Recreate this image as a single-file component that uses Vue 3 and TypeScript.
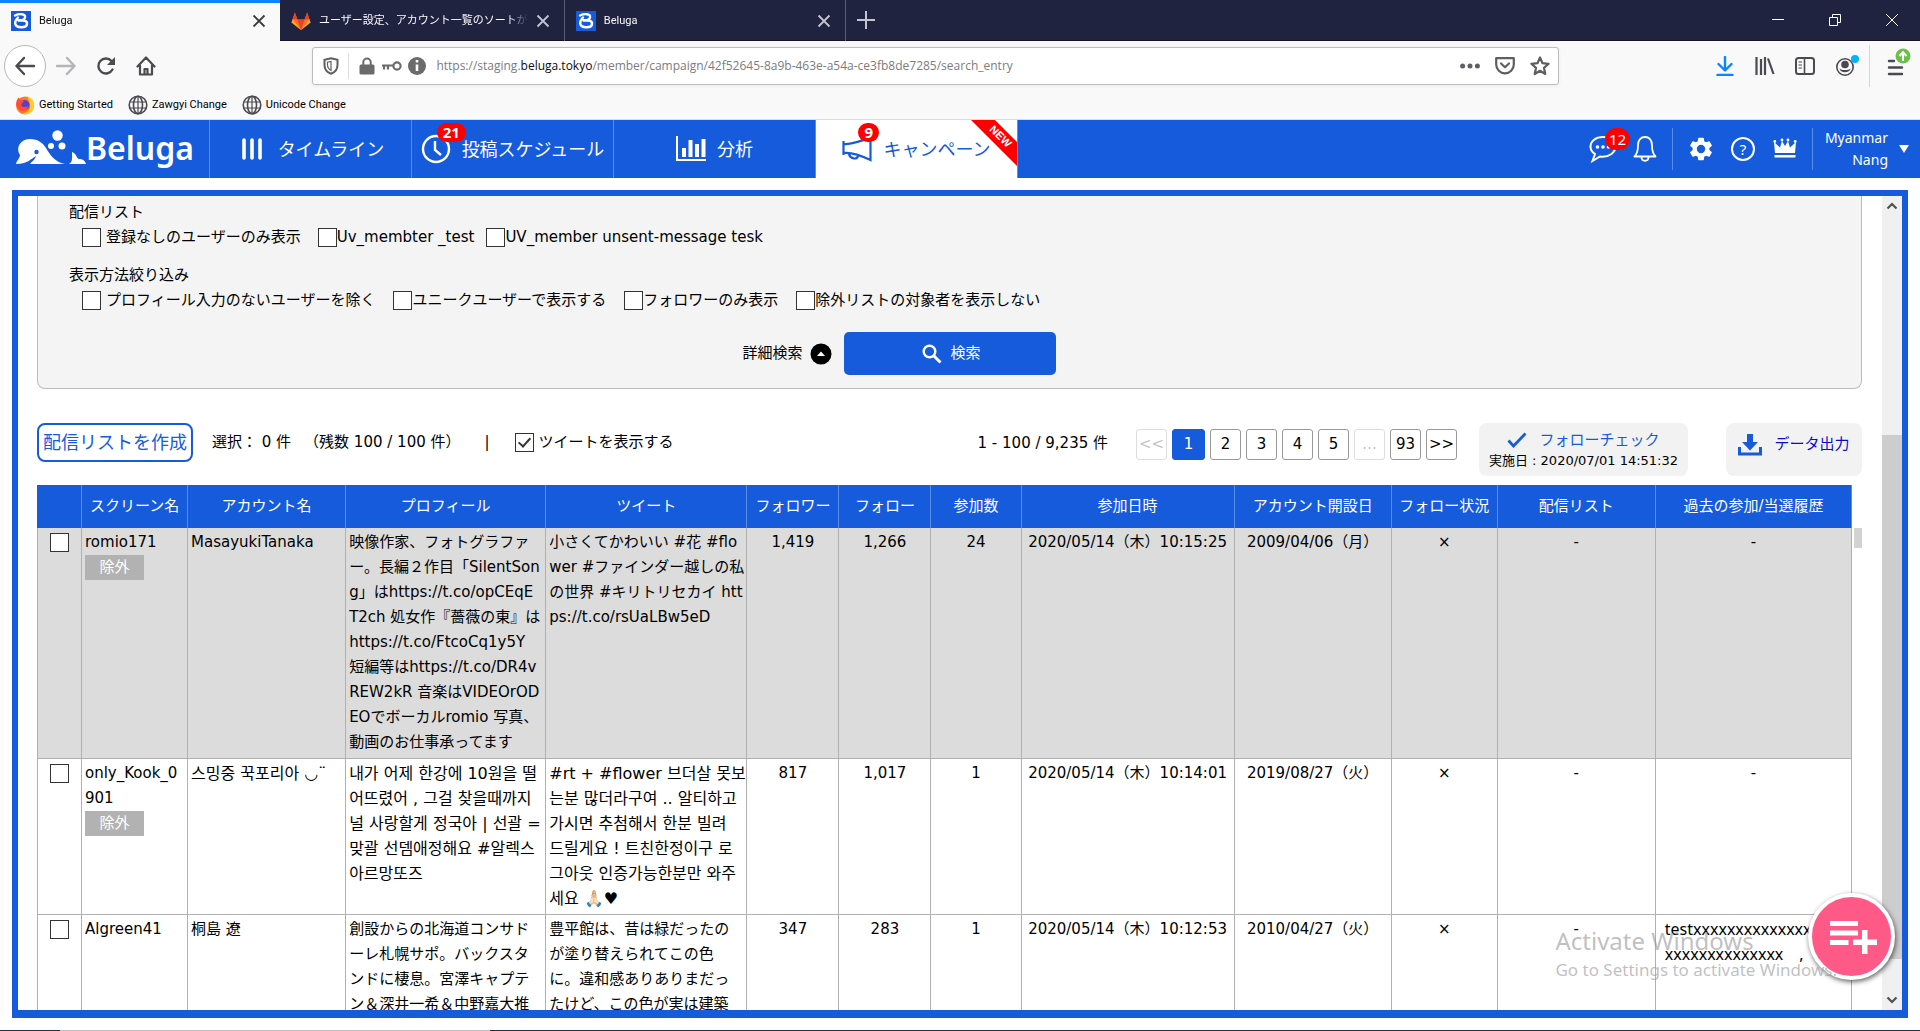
<script setup lang="ts">
import { ref } from 'vue'

interface Tab {
  title: string
  icon: 'beluga' | 'gitlab'
  active?: boolean
}

interface Entry {
  screen: string[]
  excludable: boolean
  account: string
  profile: string[]
  tweet: string[]
  followers: string
  follows: string
  entries: number
  enteredAt: string
  openedOn: string
  following: string
  list: string
  history: string[]
  korean?: boolean
  selected: boolean
}

const tabs: Tab[] = [
  { title: 'Beluga', icon: 'beluga', active: true },
  { title: 'ユーザー設定、アカウント一覧のソートが', icon: 'gitlab' },
  { title: 'Beluga', icon: 'beluga' },
]

const columns = [
  { label: '', width: 45 },
  { label: 'スクリーン名', width: 106 },
  { label: 'アカウント名', width: 158 },
  { label: 'プロフィール', width: 200 },
  { label: 'ツイート', width: 201 },
  { label: 'フォロワー', width: 92 },
  { label: 'フォロー', width: 92 },
  { label: '参加数', width: 90 },
  { label: '参加日時', width: 213 },
  { label: 'アカウント開設日', width: 157 },
  { label: 'フォロー状況', width: 106 },
  { label: '配信リスト', width: 158 },
  { label: '過去の参加/当選履歴', width: 196 },
]

const listFilters = ['登録なしのユーザーのみ表示', 'Uv_membter _test', 'UV_member unsent-message tesk']
const viewFilters = [
  'プロフィール入力のないユーザーを除く',
  'ユニークユーザーで表示する',
  'フォロワーのみ表示',
  '除外リストの対象者を表示しない',
]

const pages = ['<<', '1', '2', '3', '4', '5', '...', '93', '>>']
const currentPage = ref('1')
const showTweets = ref(true)

const entries = ref<Entry[]>([
  {
    screen: ['romio171'],
    excludable: true,
    account: 'MasayukiTanaka',
    profile: [
      '映像作家、フォトグラファ',
      'ー。長編２作目「SilentSon',
      'g」はhttps://t.co/opCEqE',
      'T2ch 処女作『薔薇の東』は',
      'https://t.co/FtcoCq1y5Y',
      '短編等はhttps://t.co/DR4v',
      'REW2kR 音楽はVIDEOrOD',
      'EOでボーカルromio 写真、',
      '動画のお仕事承ってます',
    ],
    tweet: ['小さくてかわいい #花 #flo', 'wer #ファインダー越しの私', 'の世界 #キリトリセカイ htt', 'ps://t.co/rsUaLBw5eD'],
    followers: '1,419',
    follows: '1,266',
    entries: 24,
    enteredAt: '2020/05/14（木）10:15:25',
    openedOn: '2009/04/06（月）',
    following: '×',
    list: '-',
    history: ['-'],
    selected: false,
  },
  {
    screen: ['only_Kook_0', '901'],
    excludable: true,
    account: '스밍중 꾹포리아 ◡¨',
    profile: [
      '내가 어제 한강에 10원을 떨',
      '어뜨렸어 , 그걸 찾을때까지',
      '널 사랑할게 정국아 | 선괄 =',
      '맞괄 선뎀애정해요 #알렉스',
      '아르망또즈',
    ],
    tweet: [
      '#rt + #flower 브더살 못보',
      '는분 많더라구여 .. 알티하고',
      '가시면 추첨해서 한분 빌려',
      '드릴게요 ! 트친한정이구 로',
      '그아웃 인증가능한분만 와주',
      '세요 🙏🏻♥',
    ],
    followers: '817',
    follows: '1,017',
    entries: 1,
    enteredAt: '2020/05/14（木）10:14:01',
    openedOn: '2019/08/27（火）',
    following: '×',
    list: '-',
    history: ['-'],
    korean: true,
    selected: false,
  },
  {
    screen: ['Algreen41'],
    excludable: false,
    account: '桐島 遼',
    profile: ['創設からの北海道コンサド', 'ーレ札幌サポ。バックスタ', 'ンドに棲息。宮澤キャプテ', 'ン＆深井一希＆中野嘉大推'],
    tweet: ['豊平館は、昔は緑だったの', 'が塗り替えられてこの色', 'に。違和感ありありまだっ', 'たけど、この色が実は建築'],
    followers: '347',
    follows: '283',
    entries: 1,
    enteredAt: '2020/05/14（木）10:12:53',
    openedOn: '2010/04/27（火）',
    following: '×',
    list: '-',
    history: ['testxxxxxxxxxxxxxx', 'xxxxxxxxxxxxxx　,'],
    selected: false,
  },
])
</script>

<template>
  <div class="window">
    <div class="tabstrip">
      <div v-for="(tab, i) in tabs" :key="i" class="tab" :class="{ active: tab.active }">
        <svg v-if="tab.icon === 'beluga'" class="favicon" viewBox="0 0 20 20">
          <rect width="20" height="20" fill="#165bdb" />
          <path d="M4 4.500C8 2.500 15 2.500 14 6.500C13.500 8.500 11 9.500 7.500 9.500M8 9.300C13 9 16.500 10 16 13C15.500 17.500 5 17.500 4.200 12.500C4 10 5 8.500 7 6.500" fill="none" stroke="#fff" stroke-width="2.400" stroke-linecap="round" />
        </svg>
        <svg v-else class="favicon" viewBox="0 0 20 20">
          <path d="M10 19L.5 11.500 3.800 1.500 6.500 8.500h7L16.200 1.500 19.500 11.500z" fill="#fc6d26" />
          <path d="M10 19L6.500 8.500h7z" fill="#e24329" />
          <path d="M.5 11.500L1.800 8 10 19zM19.500 11.500L18.200 8 10 19z" fill="#fca326" />
          <path d="M1.800 8L3.800 1.500 6.500 8.500zM18.200 8L16.200 1.500 13.500 8.500z" fill="#e24329" />
        </svg>
        <span class="tab-title">{{ tab.title }}</span>
        <button class="tab-close" aria-label="閉じる">
          <svg width="14" height="14" viewBox="0 0 14 14"><path d="M1.500 1.500l11 11M12.500 1.500l-11 11" stroke="currentColor" stroke-width="1.800" /></svg>
        </button>
      </div>
      <button class="new-tab" aria-label="新しいタブ">
        <svg width="18" height="18" viewBox="0 0 18 18"><path d="M9 0v18M0 9h18" stroke="#c4c5cf" stroke-width="2" /></svg>
      </button>
      <div class="win-controls">
        <button aria-label="最小化"><svg width="14" height="14" viewBox="0 0 14 14"><path d="M1 6.500h12" stroke="#fff" /></svg></button>
        <button aria-label="元に戻す">
          <svg width="14" height="14" viewBox="0 0 14 14" fill="none" stroke="#fff"><path d="M1.500 4.500h8v8h-8zM4.500 4.500v-3h8v8h-3" /></svg>
        </button>
        <button aria-label="ウィンドウを閉じる"><svg width="14" height="14" viewBox="0 0 14 14"><path d="M1 1l12 12M13 1L1 13" stroke="#fff" /></svg></button>
      </div>
    </div>

    <div class="toolbar">
      <button class="back" aria-label="戻る">
        <svg width="22" height="20" viewBox="0 0 22 20" fill="none" stroke="#4a4a4f" stroke-width="2.400" stroke-linecap="round" stroke-linejoin="round"><path d="M20 10H2.500M10 2L2.500 10l7.500 8" /></svg>
      </button>
      <button class="tool" aria-label="進む">
        <svg width="22" height="20" viewBox="0 0 22 20" fill="none" stroke="#b5b5b7" stroke-width="2.400" stroke-linecap="round" stroke-linejoin="round"><path d="M2 10h17.500M12 2l7.500 8-7.500 8" /></svg>
      </button>
      <button class="tool" aria-label="再読み込み">
        <svg width="20" height="20" viewBox="0 0 20 20"><path d="M16.500 13.500A7.500 7.500 0 1 1 15.500 5" fill="none" stroke="#4a4a4f" stroke-width="2.400" stroke-linecap="round" /><path d="M19 1v8h-8z" fill="#4a4a4f" /></svg>
      </button>
      <button class="tool" aria-label="ホーム">
        <svg width="20" height="20" viewBox="0 0 20 20" fill="none" stroke="#4a4a4f" stroke-width="2.200" stroke-linecap="round" stroke-linejoin="round"><path d="M1.500 10.500L10 1.500l8.500 9M4 9.500v9h12v-9" /><path d="M8.500 18v-5h3v5" /></svg>
      </button>
      <div class="spring"></div>
      <div class="urlbar">
        <span class="shield">
          <svg width="16" height="18" viewBox="0 0 16 18"><path d="M8 1.200L14.500 2.800V8c0 4.500-3 7.500-6.500 8.800C4.500 15.500 1.500 12.500 1.500 8V2.800z" fill="none" stroke="#5f5f63" stroke-width="2" /><path d="M8 4.500v9c-2.200-1.200-3.500-3.200-3.500-6V5.200z" fill="none" stroke="#5f5f63" stroke-width="1.200" /></svg>
        </span>
        <span class="url-sep"></span>
        <span class="url-icon">
          <svg width="16" height="18" viewBox="0 0 16 18"><rect x=".5" y="7.500" width="15" height="10" rx="1.500" fill="#6b6b6e" /><path d="M4.300 8V5.300a3.700 3.700 0 0 1 7.400 0V8" fill="none" stroke="#6b6b6e" stroke-width="2" /></svg>
        </span>
        <span class="url-icon">
          <svg width="20" height="12" viewBox="0 0 20 12" fill="none" stroke="#6b6b6e" stroke-width="2.200"><circle cx="15" cy="6" r="3.600" /><path d="M0 5.500h11.500M2 6v3.500M6 6v3.500" /></svg>
        </span>
        <span class="url-icon">
          <svg width="18" height="18" viewBox="0 0 18 18"><circle cx="9" cy="9" r="9" fill="#6b6b6e" /><path d="M9 3v2.600M9 7.500v6.500" stroke="#fff" stroke-width="2.600" /></svg>
        </span>
        <div class="url" role="textbox" aria-label="URL">https://staging.<b>beluga.tokyo</b>/member/campaign/42f52645-8a9b-463e-a54a-ce3fb8de7285/search_entry</div>
        <button class="url-act" aria-label="ページ操作">
          <svg width="20" height="6" viewBox="0 0 20 6" fill="#5f5f63"><circle cx="2.600" cy="3" r="2.500" /><circle cx="10" cy="3" r="2.500" /><circle cx="17.400" cy="3" r="2.500" /></svg>
        </button>
        <button class="url-act" aria-label="Pocket">
          <svg width="20" height="18" viewBox="0 0 20 18" fill="none" stroke="#5f5f63" stroke-width="2.200" stroke-linecap="round" stroke-linejoin="round"><path d="M1.200 1.200h17.600v6.300a8.800 8.800 0 0 1-17.600 0z" /><path d="M6 6.500l4 3.800 4-3.800" /></svg>
        </button>
        <button class="url-act" aria-label="ブックマーク">
          <svg width="20" height="20" viewBox="0 0 20 20" fill="none" stroke="#5f5f63" stroke-width="2.200" stroke-linejoin="round"><path d="M10 1.500l2.500 5.700 6.100.6-4.600 4.100 1.300 6.100-5.300-3.200-5.300 3.200 1.300-6.100L1.400 7.800l6.100-.6z" /></svg>
        </button>
      </div>
      <div class="spring"></div>
      <button class="tool" aria-label="ダウンロード">
        <svg width="18" height="20" viewBox="0 0 18 20" fill="none" stroke="#0a84ff" stroke-width="2.400" stroke-linecap="round" stroke-linejoin="round"><path d="M9 1v13M2.500 8L9 14.500 15.500 8M1.500 19h15" /></svg>
      </button>
      <button class="tool" aria-label="ライブラリ">
        <svg width="20" height="18" viewBox="0 0 20 18" stroke="#4a4a4f" stroke-width="2.200"><path d="M1.500 0v18M6 2v16M10 0v18M13 1.500L18.500 17" /></svg>
      </button>
      <button class="tool" aria-label="サイドバー">
        <svg width="20" height="18" viewBox="0 0 20 18" fill="none" stroke="#4a4a4f" stroke-width="2"><rect x="1" y="1" width="18" height="16" rx="2.500" /><path d="M9.500 1v16" stroke-width="1.600" /><path d="M3.500 5h3.500M3.500 8h3.500M3.500 11h3.500" stroke-width="1.200" /></svg>
      </button>
      <button class="tool" aria-label="アカウント">
        <svg width="30" height="26" viewBox="0 0 30 26"><circle cx="15" cy="14" r="8.200" fill="none" stroke="#4a4a4f" stroke-width="1.600" /><circle cx="15" cy="11.500" r="3.800" fill="#4a4a4f" /><path d="M9.500 15.500c2 2 9 2 11 0-.5 5-10.500 5-11 0z" fill="#4a4a4f" /><circle cx="25" cy="6" r="4" fill="#00b3ff" /></svg>
      </button>
      <span class="tool-sep"></span>
      <button class="tool" aria-label="メニュー">
        <svg width="34" height="36" viewBox="0 0 34 36"><path d="M11 13h5M11 19.500h13M11 26h13" stroke="#4a4a4f" stroke-width="2.400" stroke-linecap="round" /><circle cx="25" cy="8" r="7.500" fill="#6cc04a" /><path d="M25 13V4.500M21.500 8L25 4.300 28.500 8" fill="none" stroke="#fff" stroke-width="2" /></svg>
      </button>
    </div>

    <div class="bookmarks">
      <a href="#" class="bookmark">
        <svg width="20" height="20" viewBox="0 0 20 20"><circle cx="10" cy="10.500" r="9" fill="#ff7a1a" /><path d="M12 1c6 2 8.500 8 6.500 13-2 4.500-7 6-11 4.500C13 18 16 14 15 9c-.5-3-2-5-3-8z" fill="#ffcb2e" /><circle cx="9.500" cy="10" r="5" fill="#5b3fc8" /><path d="M1.200 8C1.500 5 3 3 4 2.500 4 5 7 5 9 6.500 7 8 6 8.500 6.500 10.500 8 13 11 12 13 11c-.5 5-6 6.500-9 3.500-2-2-3-4-2.800-6.500z" fill="#ff4b3a" /></svg>
        Getting Started
      </a>
      <a v-for="name in ['Zawgyi Change', 'Unicode Change']" :key="name" href="#" class="bookmark">
        <svg width="20" height="20" viewBox="0 0 20 20" fill="none" stroke="#4a4a4f" stroke-width="1.600"><circle cx="10" cy="10" r="8.800" /><ellipse cx="10" cy="10" rx="4.500" ry="8.800" /><path d="M1.500 7h17M1.500 13h17M10 1v18" stroke-width="1.200" /></svg>
        {{ name }}
      </a>
    </div>

    <header class="app-header">
      <a href="#" class="logo">
        <svg width="70" height="36" viewBox="0 0 70 36" fill="#fff">
          <circle cx="41.500" cy="5.500" r="5.200" /><circle cx="35" cy="16" r="3" /><circle cx="46" cy="16" r="3.500" />
          <path d="M0 34C1 30 4 28 4 25-1 17 5 9 14 9c8 0 13 4 16 9 4 7 10 15 19 16H14c2-3 5-4 6-8-5 3-9 8-20 8z" />
          <circle cx="20.500" cy="22" r="2.200" fill="#165bdb" />
          <path d="M53 34c4-2 3-7 3-12 5 2 4 6 7 7 3 0 6 1 7 5z" />
        </svg>
        <span>Beluga</span>
      </a>
      <nav class="app-nav">
        <a href="#" class="nav-item">
          <span class="nav-icon"><svg width="20" height="22" viewBox="0 0 20 22"><path d="M2 2v18M10 2v18M18 2v18" stroke="#fff" stroke-width="3.600" stroke-linecap="round" /></svg></span>
          タイムライン
        </a>
        <a href="#" class="nav-item">
          <span class="nav-icon">
            <svg width="30" height="30" viewBox="0 0 30 30" fill="none" stroke="#fff" stroke-width="2.400"><circle cx="15" cy="15" r="13" /><path d="M14 7v9l6 5" /></svg>
            <span class="badge">21</span>
          </span>
          投稿スケジュール
        </a>
        <a href="#" class="nav-item">
          <span class="nav-icon"><svg width="30" height="26" viewBox="0 0 30 26" fill="#fff"><path d="M0 0h2v23h28v2H0zM6 12h4v9H6zM12.500 4h4v17h-4zM19 8h4v13h-4zM25.500 3h4v18h-4z" /></svg></span>
          分析
        </a>
        <a href="#" class="nav-item current">
          <span class="nav-icon">
            <svg width="30" height="26" viewBox="0 0 30 26" fill="none" stroke="#165bdb" stroke-width="2.200"><path d="M1.500 5v14M1.500 8C8 9 18 5 28.500 2v22C18 19 8 16 1.500 17M7 18c1 5 8 6 9 2" /></svg>
            <span class="badge">9</span>
          </span>
          キャンペーン
          <svg class="ribbon" width="46" height="46" viewBox="0 0 46 46"><path d="M0 0h24l22 22v24z" fill="#f00" /><text x="0" y="0" transform="translate(29 17) rotate(45)" text-anchor="middle" dominant-baseline="middle">NEW</text></svg>
        </a>
      </nav>
      <div class="app-tools">
        <button class="app-tool" aria-label="メッセージ">
          <svg width="30" height="30" viewBox="0 0 30 30"><path d="M15 3C8 3 2.500 7 2.500 12.500c0 3.500 2 6 4.500 7.500L4.500 27l7.500-4.500c9 1.200 15.500-4 15.500-10C27.500 7 22 3 15 3z" fill="none" stroke="#fff" stroke-width="2" /><g fill="#fff"><circle cx="9.500" cy="13" r="1.800" /><circle cx="15" cy="13" r="1.800" /><circle cx="20.500" cy="13" r="1.800" /></g></svg>
          <span class="badge round">12</span>
        </button>
        <button class="app-tool" aria-label="通知">
          <svg width="24" height="28" viewBox="0 0 24 28" fill="none" stroke="#fff" stroke-width="1.800"><path d="M1.500 21.500c3-3 3.500-6 3.500-11C5 5 8 2 12 2s7 3 7 8.500c0 5 .5 8 3.500 11z" stroke-linejoin="round" /><path d="M8.500 22c0 5 7 5 7 0" /></svg>
        </button>
        <span class="app-sep"></span>
        <button class="app-tool" aria-label="設定">
          <svg width="28" height="28" viewBox="0 0 24 24" fill="#fff"><path d="M19.140 12.940c.04-.3.06-.61.06-.94 0-.32-.02-.64-.07-.94l2.030-1.580a.49.49 0 0 0 .12-.61l-1.920-3.320a.488.488 0 0 0-.59-.22l-2.390.96c-.5-.38-1.030-.7-1.620-.94l-.36-2.540a.484.484 0 0 0-.48-.41h-3.840c-.24 0-.43.17-.47.41l-.36 2.540c-.59.24-1.130.57-1.620.94l-2.390-.96c-.22-.08-.47 0-.59.22L2.740 8.870c-.12.21-.08.47.12.61l2.030 1.580c-.05.3-.09.63-.09.94s.02.64.07.94l-2.030 1.580a.49.49 0 0 0-.12.61l1.920 3.320c.12.22.37.29.59.22l2.390-.96c.5.38 1.030.7 1.620.94l.36 2.540c.05.24.24.41.48.41h3.840c.24 0 .44-.17.47-.41l.36-2.540c.59-.24 1.130-.56 1.620-.94l2.390.96c.22.08.47 0 .59-.22l1.920-3.320c.12-.22.07-.47-.12-.61l-2.010-1.580zM12 15.600A3.600 3.600 0 1 1 12 8.400a3.600 3.600 0 0 1 0 7.200z" /></svg>
        </button>
        <button class="app-tool" aria-label="ヘルプ"><span class="help">?</span></button>
        <button class="app-tool" aria-label="プラン">
          <svg width="24" height="24" viewBox="0 0 24 24" fill="#fff"><path d="M2 16L1 5l6 5.500L9 4l3 5 3-5 2 6.500L23 5l-1 11zM1.500 18h21v2.500h-21z" /><circle cx="1.800" cy="4.500" r="1.400" /><circle cx="9" cy="3" r="1.400" /><circle cx="15" cy="3" r="1.400" /><circle cx="22.200" cy="4.500" r="1.400" /></svg>
        </button>
        <span class="app-sep"></span>
        <button class="user"><span class="user-name">Myanmar Nang</span><span class="caret"></span></button>
      </div>
    </header>

    <main class="frame">
      <div class="content">
        <form class="search" @submit.prevent>
          <h3>配信リスト</h3>
          <div class="checks narrow">
            <label v-for="(f, i) in listFilters" :key="f" :class="{ lead: i === 0 }"><input type="checkbox" />{{ f }}</label>
          </div>
          <h3 class="second">表示方法絞り込み</h3>
          <div class="checks">
            <label v-for="(f, i) in viewFilters" :key="f" :class="{ lead: i === 0 }"><input type="checkbox" />{{ f }}</label>
          </div>
          <div class="submit-row">
            <button type="button" class="detail">詳細検索
              <svg width="22" height="22" viewBox="0 0 22 22"><circle cx="11" cy="11" r="10.500" /><path d="M11 8.500l4 4.500H7z" fill="#fff" /></svg>
            </button>
            <button class="submit">
              <svg width="20" height="20" viewBox="0 0 20 20" fill="none" stroke="#fff" stroke-width="2.400"><circle cx="7.500" cy="7.500" r="5.800" /><path d="M11.500 11.500l7 7" stroke-width="3" /></svg>
              検索
            </button>
          </div>
        </form>

        <div class="actions">
          <button class="make-list">配信リストを作成</button>
          <span class="count"><span>選択： 0 件</span><span>（残数 100 / 100 件）</span></span>
          <span class="bar">|</span>
          <label class="tweets"><input v-model="showTweets" type="checkbox" />ツイートを表示する</label>
          <div class="pager">
            <span class="range">1 - 100 / 9,235 件</span>
            <button v-for="p in pages" :key="p" :class="{ on: p === currentPage }" :disabled="p === '<<' || p === '...'" @click="currentPage = p">{{ p }}</button>
          </div>
          <button class="card follow">
            <span class="follow-title">
              <svg width="20" height="16" viewBox="0 0 20 16"><path d="M1.500 8.500l5 5.500L18.500 1.500" fill="none" stroke="#165bdb" stroke-width="2.800" /></svg>
              フォローチェック
            </span>
            <span class="follow-date">実施日 : 2020/07/01 14:51:32</span>
          </button>
          <a href="#" class="card export">
            <svg width="24" height="22" viewBox="0 0 24 22" fill="#165bdb"><path d="M9 0h6v8h5l-8 8.500L4 8h5zM0 13h3v5.500h18V13h3v8.500H0z" /></svg>
            データ出力
          </a>
        </div>

        <div class="table-area">
          <table>
            <colgroup><col v-for="(c, i) in columns" :key="i" :style="{ width: c.width + 'px' }" /></colgroup>
            <thead>
              <tr><th v-for="(c, i) in columns" :key="i">{{ c.label }}</th></tr>
            </thead>
            <tbody>
              <tr v-for="e in entries" :key="e.account" :class="{ korean: e.korean }">
                <td class="pick"><input v-model="e.selected" type="checkbox" :aria-label="e.account" /></td>
                <td>
                  <div class="lines">{{ e.screen.join('\n') }}</div>
                  <button v-if="e.excludable" class="exclude">除外</button>
                </td>
                <td class="lines wordy">{{ e.account }}</td>
                <td class="lines wordy">{{ e.profile.join('\n') }}</td>
                <td class="lines wordy">{{ e.tweet.join('\n') }}</td>
                <td class="mid">{{ e.followers }}</td>
                <td class="mid">{{ e.follows }}</td>
                <td class="mid">{{ e.entries }}</td>
                <td class="mid">{{ e.enteredAt }}</td>
                <td class="mid">{{ e.openedOn }}</td>
                <td class="mid">{{ e.following }}</td>
                <td class="mid">{{ e.list }}</td>
                <td class="lines" :class="e.history.length > 1 ? 'history' : 'mid'">{{ e.history.join('\n') }}</td>
              </tr>
            </tbody>
          </table>
          <div class="mini-thumb"></div>
        </div>
      </div>
      <div class="scrollbar">
        <svg width="12" height="8" viewBox="0 0 12 8"><path d="M1.500 6.500L6 2l4.500 4.500" fill="none" stroke="#505050" stroke-width="2.200" /></svg>
        <div class="track"><div class="thumb"></div></div>
        <svg width="12" height="8" viewBox="0 0 12 8"><path d="M1.500 1.500L6 6l4.500-4.500" fill="none" stroke="#505050" stroke-width="2.200" /></svg>
      </div>
    </main>
    <div class="taskbar"><span></span></div>

    <button class="fab" aria-label="リストに追加">
      <svg width="48" height="34" viewBox="0 0 48 34" fill="#fff"><path d="M0 1h28v5H0zM0 10.500h28v5H0zM0 20h18.500v5H0zM23 19.500h9V10h5.500v9.500H47V25h-9.500v9H32v-9h-9z" /></svg>
    </button>
    <div class="watermark">
      <p class="wm-title">Activate Windows</p>
      <p class="wm-text">Go to Settings to activate Windows.</p>
    </div>
  </div>
</template>

<style>
body {
  margin: 0;
  overflow: hidden;
}
</style>

<style scoped>
* {
  box-sizing: border-box;
}
.window {
  position: relative;
  display: flex;
  flex-direction: column;
  height: 100vh;
  background: #fff;
  color: #000;
  font: 15px/25px 'DejaVu Sans', 'Noto Sans CJK JP', sans-serif;
}
button {
  padding: 0;
  border: 0;
  background: none;
  color: inherit;
  font: inherit;
}
a {
  color: inherit;
  text-decoration: none;
}
svg {
  flex: none;
}
input[type='checkbox'] {
  display: grid;
  flex: none;
  place-content: center;
  width: 19px;
  height: 19px;
  margin: 0;
  border: 1px solid #333;
  background: #fff;
  appearance: none;
}
input[type='checkbox']:checked::before {
  width: 5px;
  height: 10px;
  margin-bottom: 3px;
  border: solid #333;
  border-width: 0 2px 2px 0;
  content: '';
  transform: rotate(42deg);
}

/* browser chrome */
.tabstrip {
  display: flex;
  flex: none;
  height: 41px;
  border-bottom: 1px solid #14152b;
  background: #202340;
  font: 11px/20px Roboto, 'Noto Sans CJK JP', sans-serif;
}
.tab {
  display: flex;
  flex: 0 1 281px;
  align-items: center;
  height: 41px;
  padding: 0 14px 0 11px;
  border-right: 1px solid #5c5e74;
  color: #f9f9fa;
}
.tab.active {
  flex-basis: 280px;
  border-right: 0;
  background: #f9f9fa;
  box-shadow: inset 0 3px #0a84ff;
  color: #0c0c0d;
}
.favicon {
  width: 20px;
  height: 20px;
}
.tab-title {
  flex: 1;
  margin: 0 8px;
  overflow: hidden;
  mask-image: linear-gradient(to left, transparent, #000 20px);
  white-space: nowrap;
}
.tab-close {
  display: flex;
  color: #c4c5cf;
}
.active .tab-close {
  color: #3c3c40;
}
.new-tab {
  display: grid;
  place-content: center;
  width: 40px;
}
.win-controls {
  display: flex;
  margin-left: auto;
}
.win-controls button {
  display: grid;
  place-content: center;
  width: 57px;
}
.toolbar {
  display: flex;
  flex: none;
  align-items: center;
  height: 50px;
  padding: 0 5px 0 4px;
  background: #f9f9fa;
}
.back,
.tool {
  display: grid;
  flex: none;
  place-content: center;
  width: 40px;
  height: 42px;
}
.back {
  width: 42px;
  border: 1px solid #b8b8ba;
  border-radius: 50%;
  background: #fff;
}
.spring {
  flex: 2;
}
.urlbar {
  display: flex;
  flex: 17;
  align-items: center;
  height: 38px;
  border: 1px solid #bdbdbf;
  border-radius: 3px;
  background: #fff;
  box-shadow: 0 1px 4px rgba(0, 0, 0, 0.06);
}
.shield,
.url-icon,
.url-act {
  display: grid;
  flex: none;
  place-content: center;
  width: 25px;
}
.shield,
.url-act {
  width: 35px;
}
.url-sep {
  width: 1px;
  height: 26px;
  margin-right: 5px;
  background: #dcdcdd;
}
.url {
  flex: 1;
  margin-left: 7px;
  overflow: hidden;
  color: #7c7c80;
  font: 12px/20px 'Open Sans', sans-serif;
  white-space: nowrap;
}
.url b {
  color: #0c0c0d;
  font-weight: 400;
}
.tool-sep {
  width: 1px;
  height: 42px;
  margin: 0 5px 0 4px;
  background: #d7d7db;
}
.bookmarks {
  display: flex;
  flex: none;
  gap: 15px;
  align-items: center;
  height: 29px;
  padding: 0 15px;
  border-bottom: 1px solid #dcdcdd;
  background: #f9f9fa;
  font: 11px/20px Roboto, sans-serif;
}
.bookmark {
  display: flex;
  gap: 4px;
  align-items: center;
}

/* application header */
.app-header {
  display: flex;
  flex: none;
  height: 58px;
  background: #165bdb;
  color: #fff;
}
.logo {
  display: flex;
  align-items: center;
  width: 210px;
  padding: 0 0 3px 16px;
  border-right: 1px solid #5b8de7;
  font: 600 32px/36px 'Noto Sans', sans-serif;
}
.app-nav {
  display: flex;
}
.nav-item {
  position: relative;
  display: flex;
  gap: 11px;
  align-items: center;
  justify-content: center;
  width: 202px;
  border-right: 1px solid #5b8de7;
  font-size: 18px;
}
.nav-item.current {
  background: #fff;
  color: #165bdb;
}
.nav-icon {
  position: relative;
  display: grid;
  place-content: center;
  width: 30px;
  height: 30px;
}
.badge {
  position: absolute;
  top: -11px;
  left: 16px;
  padding: 0 6px;
  border-radius: 10px;
  background: #f00;
  color: #fff;
  font: 700 15px/19px 'Noto Sans', sans-serif;
}
.badge.round {
  top: 3px;
  left: 23px;
  padding: 0 4px;
  border-radius: 11px;
  font-weight: 400;
  line-height: 22px;
}
.ribbon {
  position: absolute;
  top: 0;
  right: 0;
  font: 700 11px 'Liberation Sans', sans-serif;
  fill: #fff;
}
.app-tools {
  display: flex;
  align-items: center;
  margin-left: auto;
}
.app-tool {
  position: relative;
  display: grid;
  place-content: center;
  width: 42px;
  height: 48px;
}
.app-sep {
  width: 1px;
  height: 42px;
  margin: 0 7px 0 6px;
  background: #5b8de7;
}
.help {
  width: 24px;
  height: 24px;
  border: 2px solid #fff;
  border-radius: 50%;
  font: 15px/20px 'Noto Sans', sans-serif;
}
.user {
  display: flex;
  gap: 11px;
  align-items: center;
  padding-right: 11px;
  font: 14px/22px 'Noto Sans', sans-serif;
  text-align: right;
}
.user-name {
  width: 68px;
}
.caret {
  border: solid transparent;
  border-width: 8px 5px 0;
  border-top-color: #fff;
}

/* framed page */
.frame {
  display: flex;
  flex: 1;
  min-height: 0;
  margin: 12px;
  border: solid #165bdb;
  border-width: 6px 6px 8px;
  background: #fff;
}
.content {
  flex: 1;
  min-width: 0;
  padding: 0 20px 0 19px;
  overflow: hidden;
}
.scrollbar {
  display: flex;
  flex: none;
  flex-direction: column;
  align-items: center;
  width: 20px;
  padding: 6px 0;
  background: #f0f0f0;
}
.track {
  display: flex;
  flex: 1;
  flex-direction: column;
  justify-content: flex-end;
  align-self: stretch;
  padding-bottom: 37px;
}
.thumb {
  height: 70%;
  background: #cdcdcd;
}
.search {
  padding: 4px 0 13px 31px;
  border: 1px solid #bbb;
  border-top: 0;
  border-radius: 0 0 8px 8px;
  background: #f4f4f4;
}
h3 {
  margin: 0;
  font: inherit;
}
h3.second {
  margin-top: 13px;
}
.checks {
  display: flex;
  gap: 18px;
  height: 25px;
  padding-left: 13px;
}
.checks.narrow {
  gap: 12px;
}
.checks label,
.tweets {
  display: flex;
  align-items: center;
}
.lead input {
  margin-right: 5px;
}
.narrow .lead {
  margin-right: 5px;
}
.submit-row {
  display: grid;
  grid-template-columns: 1fr 212px 1fr;
  gap: 12px;
  margin: 19px 31px 0 0;
}
.detail {
  display: flex;
  gap: 7px;
  align-items: center;
  justify-self: end;
}
.submit {
  display: flex;
  gap: 8px;
  align-items: center;
  justify-content: center;
  height: 43px;
  padding-left: 4px;
  border-radius: 5px;
  background: #165bdb;
  color: #fff;
}
.actions {
  display: flex;
  align-items: flex-start;
  height: 53px;
  margin: 34px 0 9px;
  line-height: 38px;
  white-space: nowrap;
}
.make-list {
  height: 39px;
  padding: 0 4px;
  border: 2px solid #165bdb;
  border-radius: 8px;
  color: #165bdb;
  font-size: 18px;
  line-height: 32px;
}
.count {
  display: flex;
  gap: 13px;
  margin-left: 19px;
}
.bar {
  margin: 0 25px 0 24px;
}
.tweets {
  gap: 5px;
}
.pager {
  display: flex;
  gap: 5px;
  margin: 6px 22px 0 auto;
  line-height: 29px;
}
.range {
  margin-right: 23px;
}
.pager button {
  width: 31px;
  height: 31px;
  border: 1px solid #999;
  border-radius: 3px;
}
.pager button:disabled {
  border-color: #ddd;
  color: #c4c4c4;
}
.pager .on {
  width: 33px;
  border-color: #165bdb;
  background: #165bdb;
  color: #fff;
}
.card {
  height: 53px;
  border-radius: 8px;
  background: #f2f2f2;
}
.follow {
  display: flex;
  flex-direction: column;
  align-items: center;
  width: 209px;
  padding-top: 6px;
  line-height: 22px;
}
.follow-title {
  display: flex;
  gap: 12px;
  align-items: center;
  color: #165bdb;
}
.follow-date {
  font-size: 13px;
  line-height: 20px;
}
.export {
  display: flex;
  gap: 12px;
  justify-content: center;
  width: 136px;
  margin-left: 38px;
  padding-top: 11px;
  color: #0a0ac8;
  line-height: 20px;
}
.table-area {
  display: flex;
  gap: 2px;
}
table {
  flex: 1;
  width: 100%;
  table-layout: fixed;
  border-collapse: separate;
  border-spacing: 0;
}
th {
  height: 43px;
  padding: 0;
  border-right: 1px solid #5b8de7;
  background: #165bdb;
  color: #fff;
  font-weight: 400;
  white-space: nowrap;
}
td {
  padding: 2px 0 3px 3px;
  border-right: 1px solid #b0b0b0;
  border-bottom: 1px solid #b0b0b0;
  vertical-align: top;
}
td:first-child {
  border-left: 1px solid #b0b0b0;
}
tbody tr:first-child td {
  background: #dcdcdc;
}
.lines {
  white-space: pre;
}
td.mid {
  padding-left: 0;
  text-align: center;
  white-space: nowrap;
}
.korean .wordy {
  font-size: 16px;
}
.pick input {
  margin: 3px 0 0 9px;
}
.exclude {
  display: block;
  width: 59px;
  height: 25px;
  background: #b2b2b2;
  color: #fff;
}
td.history {
  padding-left: 9px;
  font-family: 'Noto Sans', 'Noto Sans CJK JP', sans-serif;
  font-size: 16px;
}
.mini-thumb {
  flex: none;
  width: 8px;
  height: 20px;
  margin-top: 43px;
  background: #d3d3d3;
}
.taskbar {
  flex: none;
  height: 1px;
  padding-left: 60px;
  background: #22303c;
}
.taskbar span {
  display: block;
  width: 430px;
  height: 1px;
  background: #bdbdbd;
}

/* layers above the page */
.fab {
  position: absolute;
  right: 25px;
  bottom: 51px;
  display: grid;
  place-content: center;
  width: 87px;
  height: 87px;
  padding-left: 4px;
  border: 4px solid #fff;
  border-radius: 50%;
  background: #ff5a87;
  box-shadow: 1px 2px 5px rgba(0, 0, 0, 0.6);
}
.watermark {
  position: absolute;
  right: 83px;
  bottom: 48px;
  color: rgba(150, 150, 150, 0.6);
  font-family: 'Noto Sans', sans-serif;
  pointer-events: none;
}
.watermark p {
  margin: 0;
}
.wm-title {
  font-size: 24px;
  line-height: 32px;
}
.wm-text {
  font-size: 17px;
  line-height: 26px;
}
</style>
